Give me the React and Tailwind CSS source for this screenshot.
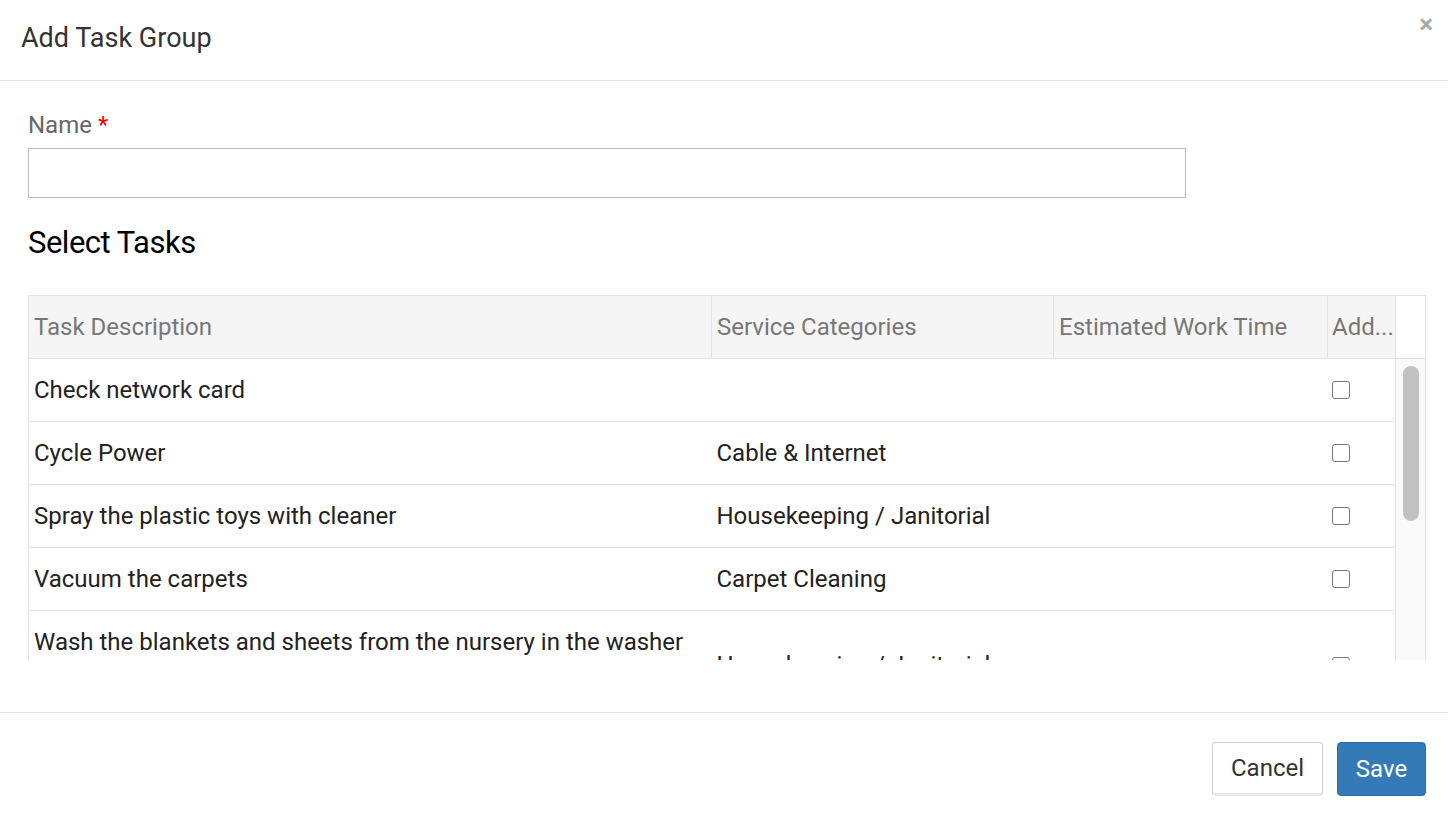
import React from 'react';

const tasks = [
  { desc: 'Check network card', cat: '' },
  { desc: 'Cycle Power', cat: 'Cable & Internet' },
  { desc: 'Spray the plastic toys with cleaner', cat: 'Housekeeping / Janitorial' },
  { desc: 'Vacuum the carpets', cat: 'Carpet Cleaning' },
  {
    desc: 'Wash the blankets and sheets from the nursery in the washer machine on the delicate cycle with a mild detergent, then dry them on low heat and fold them neatly',
    cat: 'Housekeeping / Janitorial',
    tall: true
  }
];

const Checkbox = () => (
  <span className="block w-[18px] h-[18px] rounded-[3px] border border-[#767676] bg-white" />
);

const App = () => {
  return (
    <div className="w-[1448px] h-[826px] bg-white font-['Roboto',sans-serif] flex flex-col overflow-hidden">
      {/* header */}
      <div className="h-[81px] border-b border-[#e5e5e5] flex items-center justify-between pl-[21px] pr-[15px] shrink-0">
        <h1 className="text-[27px] text-[#333] leading-none -mt-[4px]">Add Task Group</h1>
        <button className="text-[#aaa] text-[26px] font-bold leading-none -mt-[32px]">×</button>
      </div>

      {/* body */}
      <div className="flex-1 pl-[28px] pr-[22px] pt-[31px]">
        <label className="block text-[24px] text-[#666] leading-[27px]">
          Name <span className="text-[#ff0000]">*</span>
        </label>
        <input className="mt-[9px] block w-[1158px] h-[50px] border border-[#bbb] outline-none px-3 text-[22px]" />

        <h2 className="mt-[26px] text-[31px] text-black leading-[38px] tracking-[-0.5px]">Select Tasks</h2>

        <div className="mt-[33px] w-[1398px] border-l border-t border-r border-[#e3e3e3]">
          {/* table header */}
          <div className="flex h-[63px] border-b border-[#e3e3e3] text-[24px] text-[#777]">
            <div className="w-[683px] bg-[#f5f5f5] border-r border-[#e3e3e3] flex items-center px-[5px]">Task Description</div>
            <div className="w-[342px] bg-[#f5f5f5] border-r border-[#e3e3e3] flex items-center px-[5px]">Service Categories</div>
            <div className="w-[274px] bg-[#f5f5f5] border-r border-[#e3e3e3] flex items-center px-[5px]">Estimated Work Time</div>
            <div className="w-[68px] bg-[#f5f5f5] border-r border-[#e3e3e3] flex items-center px-[4px] whitespace-nowrap overflow-hidden">Add...</div>
            <div className="flex-1 bg-white" />
          </div>

          {/* table body */}
          <div className="flex h-[301px] overflow-hidden">
            <div className="w-[1367px] border-r border-[#e3e3e3]">
              {tasks.map((t, i) => (
                <div key={i} className="flex border-b border-[#e3e3e3] text-[24px] text-[#222] leading-[28px]">
                  <div className="w-[683px] px-[5px] py-[17px]">{t.desc}</div>
                  <div className={`w-[342px] px-[5px] flex ${t.tall ? 'items-start pt-[40px]' : 'items-center py-[17px]'}`}>{t.cat}</div>
                  <div className="w-[274px] px-[5px] py-[17px]" />
                  <div className={`w-[68px] flex pl-[5px] ${t.tall ? 'items-start pt-[46px]' : 'items-center'}`}>
                    <Checkbox />
                  </div>
                </div>
              ))}
            </div>
            <div className="flex-1 bg-[#fafafa] flex justify-center pt-[7px]">
              <div className="w-[16px] h-[155px] rounded-full bg-[#c1c1c1]" />
            </div>
          </div>
        </div>
      </div>

      {/* footer */}
      <div className="h-[114px] border-t border-[#e5e5e5] flex items-start justify-end gap-[14px] pr-[22px] pt-[29px] shrink-0">
        <button className="w-[111px] h-[54px] rounded-[4px] border border-[#ccc] border-b-[3px] border-b-[#e8e8e8] bg-white text-[24px] text-[#333]">
          Cancel
        </button>
        <button className="w-[89px] h-[54px] rounded-[4px] border border-[#2e6da4] bg-[#337ab7] text-[24px] text-white">
          Save
        </button>
      </div>
    </div>
  );
};

export default App;
